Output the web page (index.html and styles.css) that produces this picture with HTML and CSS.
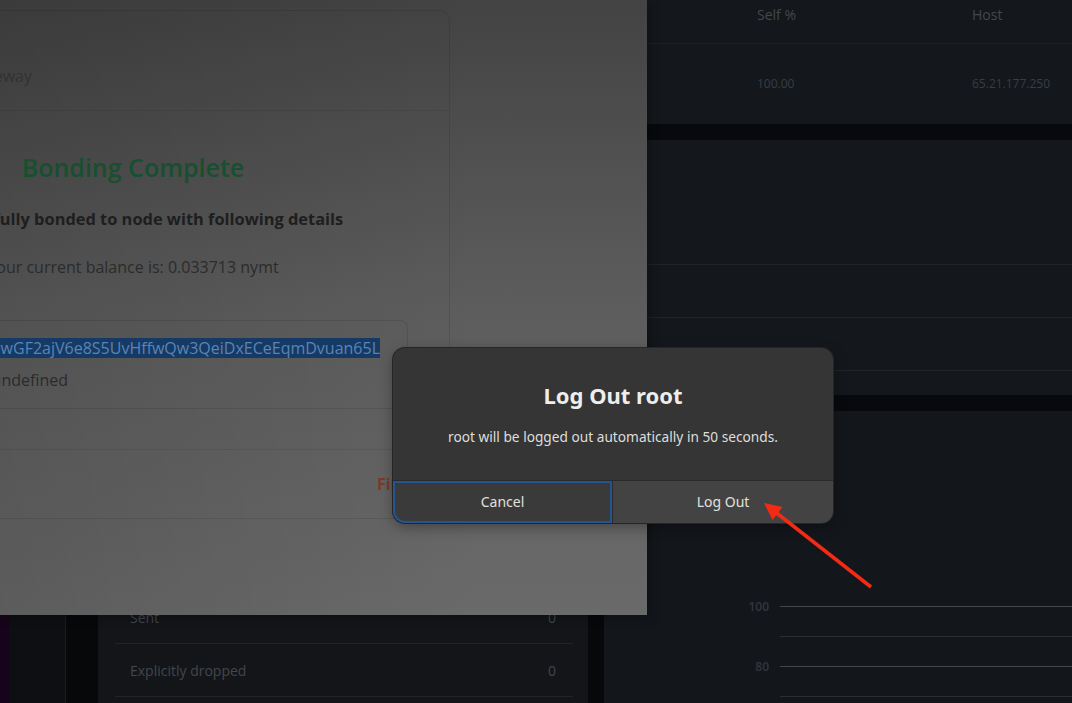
FILE: index.html
```html
<!DOCTYPE html>
<html lang="en">
<head>
<meta charset="utf-8">
<title>Log Out</title>
<link rel="stylesheet" href="styles.css">
</head>
<body>
<div class="desktop">
  <div class="strip"></div>
  <aside class="rail"></aside>
  <div class="gutter"></div>
  <section class="col-left">
    <div class="stat-list">
      <div class="stat-row"><span>Received</span><span>0</span></div>
      <div class="stat-row"><span>Sent</span><span>0</span></div>
      <div class="stat-row"><span>Explicitly dropped</span><span>0</span></div>
    </div>
  </section>
  <div class="gutter"></div>
  <section class="col-right">
    <div class="panel table-panel">
      <div class="trow thead"><span>Node</span><span>Self %</span><span>Host</span></div>
      <div class="trow tbody"><span>Mixnode</span><span>100.00</span><span>65.21.177.250</span></div>
    </div>
    <div class="band"></div>
    <div class="panel list-panel">
      <div class="list-row"></div>
      <div class="list-row"></div>
      <div class="list-row"></div>
    </div>
    <div class="band"></div>
    <div class="panel chart-panel">
      <div class="tick major"><span class="tick-label">100</span><span class="tick-line"></span></div>
      <div class="tick"><span class="tick-label"></span><span class="tick-line"></span></div>
      <div class="tick major"><span class="tick-label">80</span><span class="tick-line"></span></div>
      <div class="tick"><span class="tick-label"></span><span class="tick-line"></span></div>
    </div>
  </section>
</div>

<div class="window">
  <div class="card">
    <div class="card-head">
      <div class="clip-right w32"><span>Gateway</span></div>
    </div>
    <div class="card-body">
      <div class="center-line title-green">Bonding Complete</div>
      <div class="center-line bold-line">Successfully bonded to node with following details</div>
      <div class="center-line plain-line">Your current balance is: 0.033713 nymt</div>
      <div class="details">
        <div class="clip-right w380"><span class="selected">Identity Key: 8ApwGF2ajV6e8S5UvHffwQw3QeiDxECeEqmDvuan65L</span></div>
        <div class="clip-right w68 plain-line"><span>Version: undefined</span></div>
      </div>
    </div>
    <div class="card-sec striped"></div>
    <div class="card-sec actions"><span class="finish">Finish</span></div>
  </div>
</div>

<div class="dialog">
  <div class="dialog-body">
    <h1 class="dialog-title">Log Out root</h1>
    <p class="dialog-msg">root will be logged out automatically in 50 seconds.</p>
  </div>
  <div class="dialog-buttons">
    <button class="btn btn-cancel">Cancel</button>
    <button class="btn btn-logout">Log Out</button>
  </div>
</div>

<svg class="arrow" width="125" height="100" viewBox="0 0 125 100">
  <line x1="116" y1="92" x2="21" y2="17.5" stroke="#f42b14" stroke-width="3.5" stroke-linecap="butt"/>
  <polygon points="9,8 27.5,12 17.5,25" fill="#f42b14"/>
</svg>
</body>
</html>
```

FILE: styles.css
```css
* { box-sizing: border-box; margin: 0; padding: 0; }
html, body { width: 1072px; height: 703px; overflow: hidden; }
body {
  background: #13161b;
  font-family: "Open Sans", "Noto Sans", sans-serif;
  position: relative;
}

/* dashboard behind */
.desktop {
  display: grid;
  grid-template-columns: 9px 57px 32px 490px 16px 1fr;
  height: 703px;
}
.strip { background: #17041a; }
.rail { background: #0d0f13; border-right: 1px solid #1a1c20; }
.gutter { background: #06080a; }
.col-left { background: #131519; padding: 538px 15px 0 17px; }
.stat-row {
  display: flex;
  justify-content: space-between;
  align-items: center;
  height: 53px;
  border-bottom: 1px solid #212327;
  padding: 0 17px 0 15px;
  font-size: 14px;
  color: #43464b;
}
.col-right { display: flex; flex-direction: column; }
.panel { background: #14171c; }
.band { height: 16px; background: #07090c; flex: none; }
.table-panel { height: 124px; flex: none; }
.trow {
  display: grid;
  grid-template-columns: 153px 215px 1fr;
}
.trow span:first-child { visibility: hidden; }
.thead {
  font-size: 14px;
  line-height: 20px;
  padding: 5px 0 18px;
  color: #44474d;
  border-bottom: 1px solid #1c1f24;
}
.tbody {
  font-size: 12px;
  line-height: 20px;
  padding: 30px 0 30px;
  color: #3a3d43;
}
.list-panel { height: 255px; flex: none; padding-top: 124px; }
.list-row { height: 53px; border-top: 1px solid #202328; }
.chart-panel { flex: 1; padding-top: 180px; background: #13161b; }
.tick { display: flex; align-items: center; height: 30px; }
.tick-label {
  width: 165px;
  text-align: right;
  font-size: 12px;
  font-weight: 600;
  color: #33363d;
}
.tick-line { flex: 1; height: 1px; margin-left: 11px; background: #2a2d32; }
.tick.major .tick-line { background: #46474a; }

/* the dimmed app window */
.window {
  position: absolute;
  left: 0;
  top: 0;
  width: 647px;
  height: 615px;
  overflow: hidden;
  background:
    linear-gradient(90deg, rgba(0,0,0,0.13), rgba(0,0,0,0) 75%),
    linear-gradient(180deg, #434343 0%, #5d5d5e 50%, #6a6a6b 100%);
  box-shadow: 2px 2px 10px rgba(0,0,0,0.35);
}
.card {
  margin-top: 10px;
  width: 450px;
  height: 509px;
  border: 1px solid rgba(0,0,0,0.1);
  border-left: none;
  border-radius: 0 10px 10px 0;
  display: flex;
  flex-direction: column;
}
.card-head {
  height: 100px;
  border-bottom: 1px solid rgba(0,0,0,0.08);
  padding-top: 54px;
  font-size: 16px;
  line-height: 22px;
  color: #323232;
}
.clip-right {
  display: flex;
  justify-content: flex-end;
  white-space: nowrap;
}
.w32 { width: 32px; }
.w380 { width: 380px; }
.w68 { width: 68px; }
.card-body { padding-top: 40px; height: 298px; }
.center-line {
  display: flex;
  justify-content: center;
  width: 266px;
  white-space: nowrap;
}
.title-green {
  font-size: 25px;
  font-weight: 600;
  line-height: 32px;
  color: #16502f;
}
.bold-line {
  width: 274px;
  margin-top: 24px;
  font-size: 16.4px;
  font-weight: 700;
  line-height: 24px;
  color: #1e1e1e;
}
.plain-line {
  font-size: 16px;
  line-height: 24px;
  color: #2b2b2b;
}
.center-line.plain-line { margin-top: 24px; }
.details {
  margin-top: 41px;
  width: 408px;
  height: 89px;
  border: 1px solid rgba(0,0,0,0.1);
  border-left: none;
  border-radius: 0 8px 0 0;
  padding-top: 17px;
  font-size: 16px;
}
.details .w380 { line-height: 20px; }
.selected {
  background: #163a66;
  color: #5b84b4;
  line-height: 20px;
}
.details .plain-line { margin-top: 12px; line-height: 20px; }
.card-sec { border-bottom: 1px solid rgba(0,0,0,0.08); }
.striped { height: 41px; }
.actions {
  flex: 1;
  display: flex;
  align-items: center;
  padding-left: 377px;
  border-bottom: none;
}
.finish {
  font-size: 16px;
  font-weight: 700;
  color: #7d3a29;
}

/* gnome dialog */
.dialog {
  position: absolute;
  left: 393px;
  top: 348px;
  width: 440px;
  height: 175px;
  background: #353535;
  border-radius: 12px;
  box-shadow: 0 0 0 1px #262626, 0 4px 14px rgba(0,0,0,0.35);
  overflow: hidden;
  display: flex;
  flex-direction: column;
  font-family: "Noto Sans", "Open Sans", sans-serif;
  color: #e6e6e6;
}
.dialog-body { height: 132px; padding-top: 32px; text-align: center; }
.dialog-title {
  font-size: 22px;
  font-weight: 700;
  line-height: 30px;
  color: #eeeeec;
}
.dialog-msg {
  margin-top: 17px;
  font-size: 13.7px;
  line-height: 20px;
  color: #dededc;
}
.dialog-buttons {
  display: flex;
  height: 43px;
  border-top: 1px solid #2a2a2a;
}
.btn {
  font-family: inherit;
  font-size: 14px;
  line-height: 20px;
  color: #e0e0de;
  border: none;
  background: #3a3a3a;
}
.btn-cancel {
  width: 219px;
  box-shadow: inset 0 0 0 2px #255490;
  border-radius: 0 0 0 12px;
}
.btn-logout {
  flex: 1;
  background: #434343;
  border-left: 1px solid #2b2b2b;
}

.arrow {
  position: absolute;
  left: 755px;
  top: 495px;
}
```
